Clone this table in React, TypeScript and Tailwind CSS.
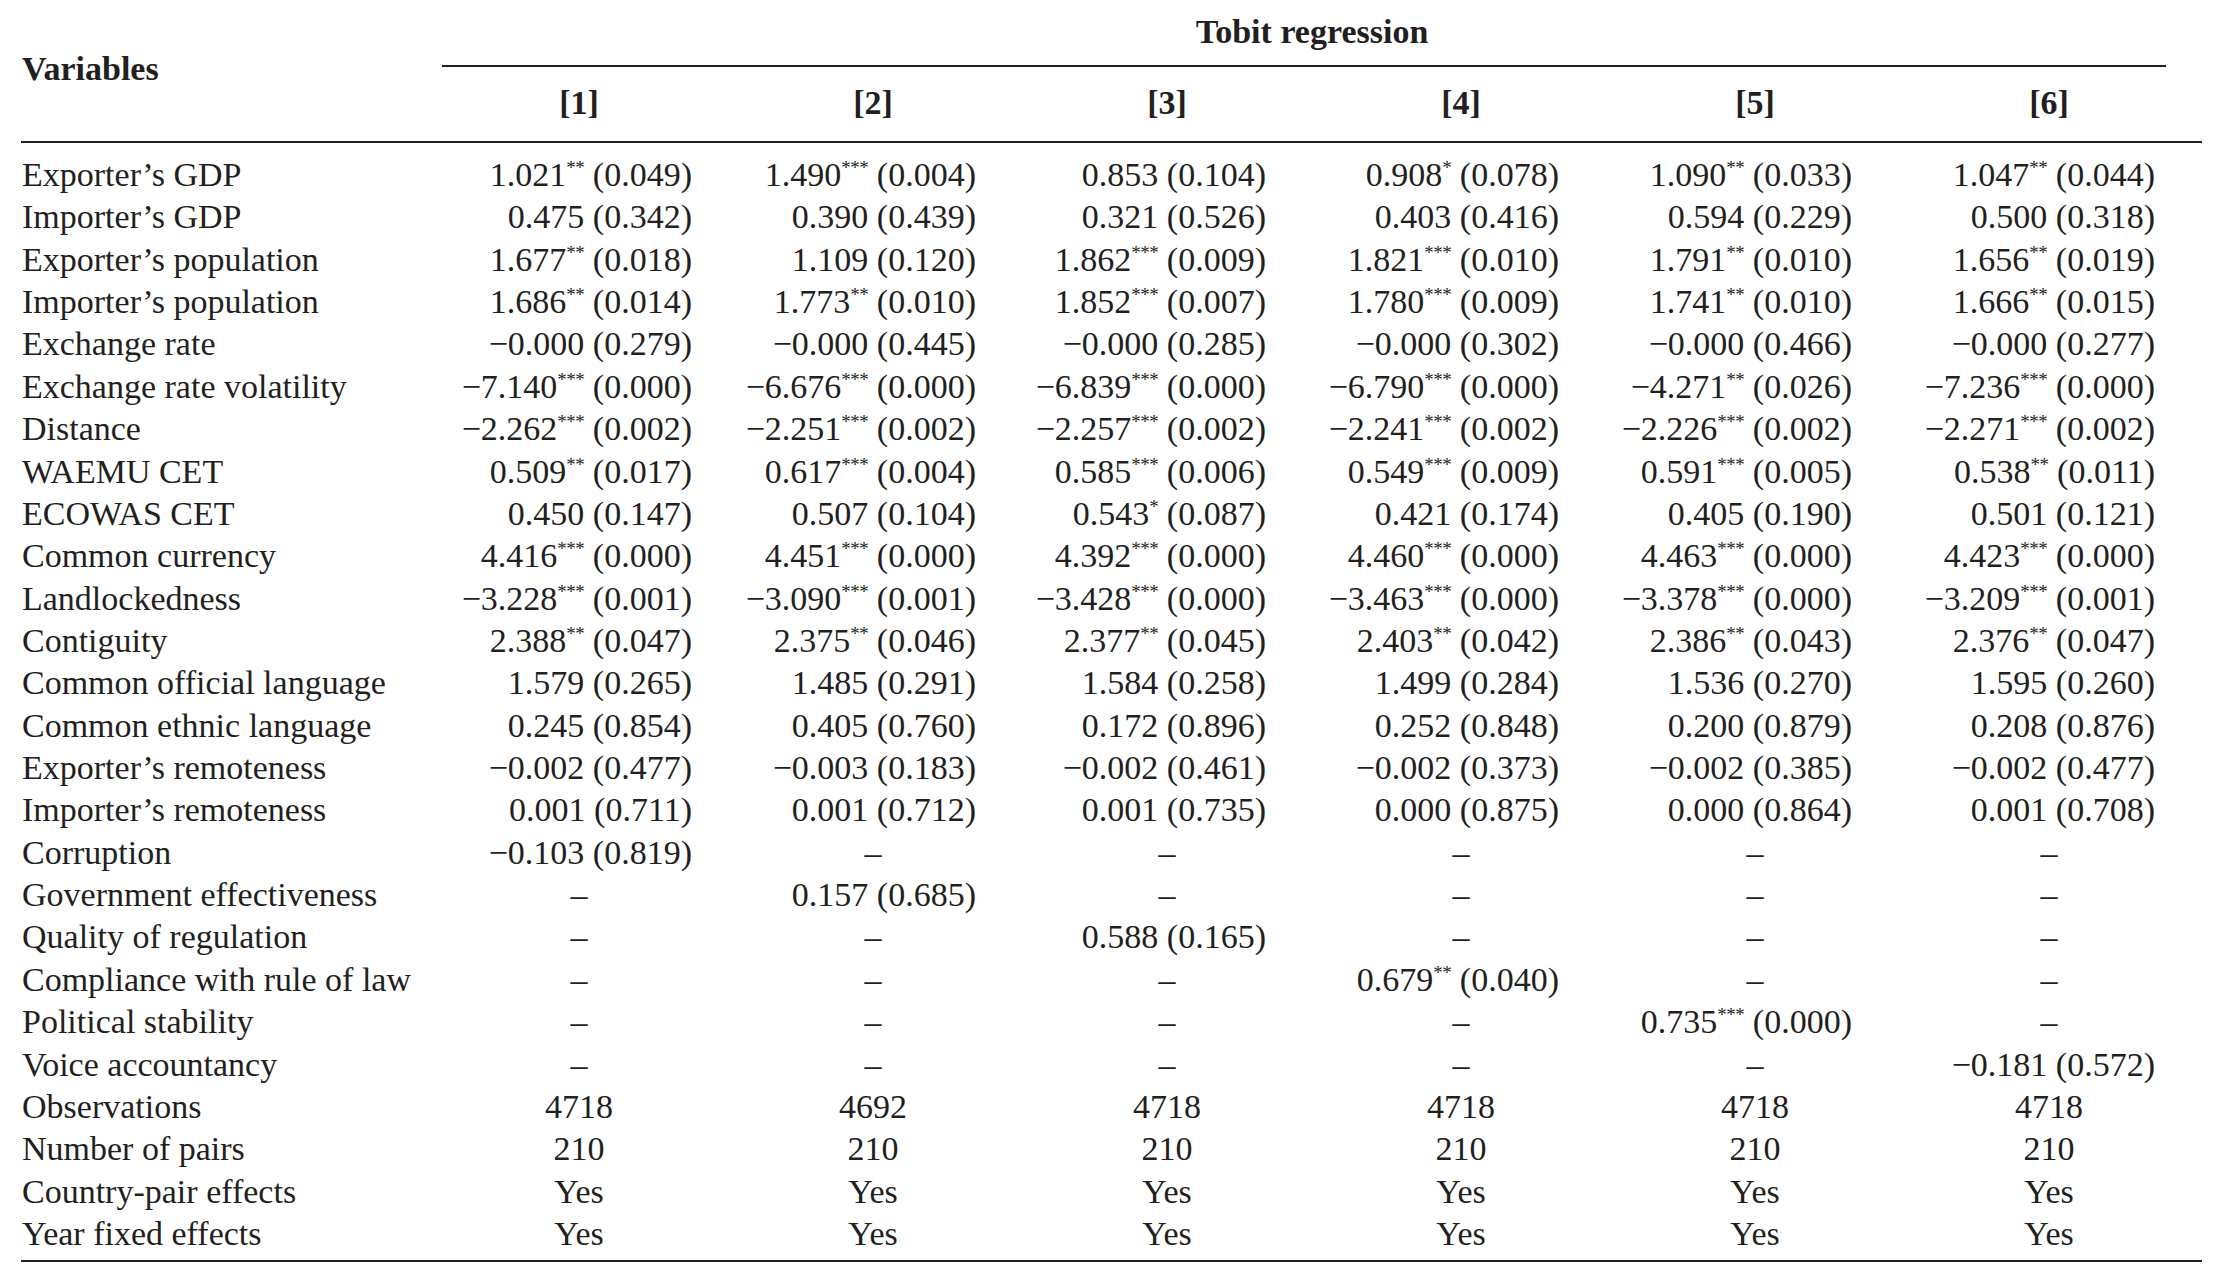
import React from "react";

type Row = { label: string; cells: string[] };

const D = "–";

const rows: Row[] = [
  { label: "Exporter’s GDP", cells: ["1.021** (0.049)", "1.490*** (0.004)", "0.853 (0.104)", "0.908* (0.078)", "1.090** (0.033)", "1.047** (0.044)"] },
  { label: "Importer’s GDP", cells: ["0.475 (0.342)", "0.390 (0.439)", "0.321 (0.526)", "0.403 (0.416)", "0.594 (0.229)", "0.500 (0.318)"] },
  { label: "Exporter’s population", cells: ["1.677** (0.018)", "1.109 (0.120)", "1.862*** (0.009)", "1.821*** (0.010)", "1.791** (0.010)", "1.656** (0.019)"] },
  { label: "Importer’s population", cells: ["1.686** (0.014)", "1.773** (0.010)", "1.852*** (0.007)", "1.780*** (0.009)", "1.741** (0.010)", "1.666** (0.015)"] },
  { label: "Exchange rate", cells: ["−0.000 (0.279)", "−0.000 (0.445)", "−0.000 (0.285)", "−0.000 (0.302)", "−0.000 (0.466)", "−0.000 (0.277)"] },
  { label: "Exchange rate volatility", cells: ["−7.140*** (0.000)", "−6.676*** (0.000)", "−6.839*** (0.000)", "−6.790*** (0.000)", "−4.271** (0.026)", "−7.236*** (0.000)"] },
  { label: "Distance", cells: ["−2.262*** (0.002)", "−2.251*** (0.002)", "−2.257*** (0.002)", "−2.241*** (0.002)", "−2.226*** (0.002)", "−2.271*** (0.002)"] },
  { label: "WAEMU CET", cells: ["0.509** (0.017)", "0.617*** (0.004)", "0.585*** (0.006)", "0.549*** (0.009)", "0.591*** (0.005)", "0.538** (0.011)"] },
  { label: "ECOWAS CET", cells: ["0.450 (0.147)", "0.507 (0.104)", "0.543* (0.087)", "0.421 (0.174)", "0.405 (0.190)", "0.501 (0.121)"] },
  { label: "Common currency", cells: ["4.416*** (0.000)", "4.451*** (0.000)", "4.392*** (0.000)", "4.460*** (0.000)", "4.463*** (0.000)", "4.423*** (0.000)"] },
  { label: "Landlockedness", cells: ["−3.228*** (0.001)", "−3.090*** (0.001)", "−3.428*** (0.000)", "−3.463*** (0.000)", "−3.378*** (0.000)", "−3.209*** (0.001)"] },
  { label: "Contiguity", cells: ["2.388** (0.047)", "2.375** (0.046)", "2.377** (0.045)", "2.403** (0.042)", "2.386** (0.043)", "2.376** (0.047)"] },
  { label: "Common official language", cells: ["1.579 (0.265)", "1.485 (0.291)", "1.584 (0.258)", "1.499 (0.284)", "1.536 (0.270)", "1.595 (0.260)"] },
  { label: "Common ethnic language", cells: ["0.245 (0.854)", "0.405 (0.760)", "0.172 (0.896)", "0.252 (0.848)", "0.200 (0.879)", "0.208 (0.876)"] },
  { label: "Exporter’s remoteness", cells: ["−0.002 (0.477)", "−0.003 (0.183)", "−0.002 (0.461)", "−0.002 (0.373)", "−0.002 (0.385)", "−0.002 (0.477)"] },
  { label: "Importer’s remoteness", cells: ["0.001 (0.711)", "0.001 (0.712)", "0.001 (0.735)", "0.000 (0.875)", "0.000 (0.864)", "0.001 (0.708)"] },
  { label: "Corruption", cells: ["−0.103 (0.819)", D, D, D, D, D] },
  { label: "Government effectiveness", cells: [D, "0.157 (0.685)", D, D, D, D] },
  { label: "Quality of regulation", cells: [D, D, "0.588 (0.165)", D, D, D] },
  { label: "Compliance with rule of law", cells: [D, D, D, "0.679** (0.040)", D, D] },
  { label: "Political stability", cells: [D, D, D, D, "0.735*** (0.000)", D] },
  { label: "Voice accountancy", cells: [D, D, D, D, D, "−0.181 (0.572)"] },
  { label: "Observations", cells: ["4718", "4692", "4718", "4718", "4718", "4718"] },
  { label: "Number of pairs", cells: ["210", "210", "210", "210", "210", "210"] },
  { label: "Country-pair effects", cells: ["Yes", "Yes", "Yes", "Yes", "Yes", "Yes"] },
  { label: "Year fixed effects", cells: ["Yes", "Yes", "Yes", "Yes", "Yes", "Yes"] },
];

const PADS = ["pr-[34px]", "pr-[44px]", "pr-[48px]", "pr-[49px]", "pr-[50px]", "pr-[41px]"];

function Cell({ v, i }: { v: string; i: number }) {
  const m = v.match(/^(−?[\d.]+)(\**) (\(.*\))$/);
  if (!m) {
    return <div className="text-center whitespace-nowrap">{v}</div>;
  }
  return (
    <div className={`text-right whitespace-nowrap ${PADS[i]}`}>
      {m[1]}
      {m[2] && (
        <span className="relative -top-[12px] text-[19px] leading-none tracking-[-0.5px]">{m[2]}</span>
      )}{" "}
      {m[3]}
    </div>
  );
}

export default function App() {
  return (
    <div
      className="w-[2220px] h-[1272px] bg-white text-[#231f20] overflow-hidden"
      style={{ fontFamily: '"Liberation Serif", "Times New Roman", serif' }}
    >
      <div className="ml-[21px] w-[2181px] text-[34px]">
        {/* header */}
        <div className="flex h-[141px]">
          <div className="w-[411px] flex items-center pl-[1px] pb-[4px] font-bold">Variables</div>
          <div className="flex-1 flex flex-col">
            <div className="h-[65px] flex items-center justify-center font-bold pb-[3px] pr-[10px]">
              Tobit regression
            </div>
            <div className="h-[2px] bg-[#231f20] ml-[10px] mr-[36px]" />
            <div className="flex-1 grid grid-cols-[repeat(6,294px)] items-center font-bold pb-[4px]">
              {[1, 2, 3, 4, 5, 6].map((n) => (
                <div key={n} className="text-center">[{n}]</div>
              ))}
            </div>
          </div>
        </div>
        <div className="h-[2px] bg-[#231f20]" />
        {/* body */}
        <div className="pt-[11px] pb-[5px]">
          {rows.map((r) => (
            <div key={r.label} className="grid grid-cols-[411px_repeat(6,294px)] h-[42.36px] leading-[42.36px]">
              <div className="pl-[1px] whitespace-nowrap">{r.label}</div>
              {r.cells.map((c, i) => (
                <Cell key={i} v={c} i={i} />
              ))}
            </div>
          ))}
        </div>
        <div className="h-[2px] bg-[#231f20]" />
      </div>
    </div>
  );
}
